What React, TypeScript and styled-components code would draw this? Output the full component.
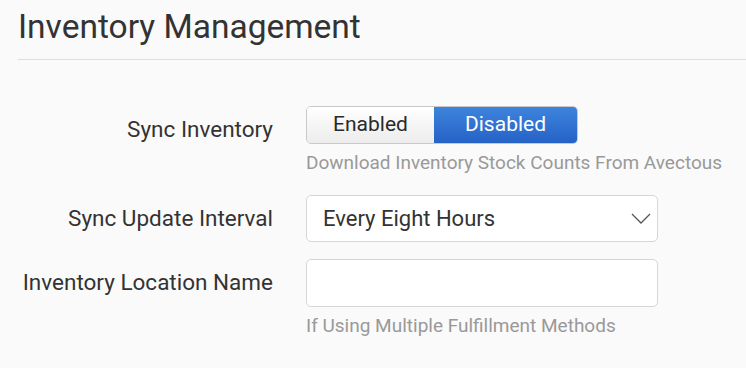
import React, { useState } from 'react';
import styled, { createGlobalStyle } from 'styled-components';

const GlobalStyle = createGlobalStyle`
  html, body {
    margin: 0;
    padding: 0;
    background: #fafafa;
  }
  body {
    font-family: Roboto, "Noto Sans", "Liberation Sans", sans-serif;
    color: #333;
  }
`;

type SegmentProps = { $active?: boolean; $first?: boolean };

const App = () => {
    const [sync, setSync] = useState<'enabled' | 'disabled'>('disabled');

    return (
        <>
            <GlobalStyle/>
            <Page>
                <Title>Inventory Management</Title>
                <Form>
                    <Label>Sync Inventory</Label>
                    <Field>
                        <Toggle>
                            <Segment $first $active={sync === 'enabled'} onClick={() => setSync('enabled')}>
                                Enabled
                            </Segment>
                            <Segment $active={sync === 'disabled'} onClick={() => setSync('disabled')}>
                                Disabled
                            </Segment>
                        </Toggle>
                        <Help>Download Inventory Stock Counts From Avectous</Help>
                    </Field>

                    <Label>Sync Update Interval</Label>
                    <Field>
                        <SelectBox>
                            <span>Every Eight Hours</span>
                            <svg width="20" height="11" viewBox="0 0 20 11" fill="none">
                                <path d="M1 1l9 9 9-9" stroke="#555" strokeWidth="1.3"/>
                            </svg>
                        </SelectBox>
                    </Field>

                    <Label>Inventory Location Name</Label>
                    <Field>
                        <TextInput type="text"/>
                        <Help>If Using Multiple Fulfillment Methods</Help>
                    </Field>
                </Form>
            </Page>
        </>
    );
};
export default App;

const Page = styled.div`
  padding-left: 18px;
  width: 728px;
`;

const Title = styled.h1`
  margin: 0;
  padding: 7px 0 12px;
  font-size: 33.5px;
  font-weight: 400;
  line-height: 40px;
  color: #333;
  border-bottom: 1px solid #dedede;
`;

const Form = styled.div`
  display: grid;
  grid-template-columns: 255px 352px;
  column-gap: 33px;
  row-gap: 17px;
  align-items: start;
  padding-top: 46px;
`;

const Label = styled.div`
  text-align: right;
  font-size: 22.5px;
  line-height: 47px;
  white-space: nowrap;
  color: #333;
`;

const Field = styled.div`
  display: flex;
  flex-direction: column;
  align-items: flex-start;
`;

const Toggle = styled.div`
  display: flex;
  height: 38px;
  border-radius: 5px;
  overflow: hidden;
  border: 1px solid #c9c9c9;
  box-sizing: border-box;
`;

const Segment = styled.button<SegmentProps>`
  border: none;
  margin: 0;
  padding: 0 0 2px;
  width: ${p => (p.$first ? '127px' : '143px')};
  font-family: inherit;
  font-size: 21px;
  cursor: pointer;
  color: ${p => (p.$active ? '#fff' : '#2a2a2a')};
  background: ${p => (p.$active
    ? 'linear-gradient(#3d84dc, #2562c6)'
    : 'linear-gradient(#ffffff, #ececec)')};
`;

const Help = styled.div`
  margin: 8px 0 4px;
  font-size: 19px;
  line-height: 22px;
  white-space: nowrap;
  color: #999;
`;

const SelectBox = styled.div`
  box-sizing: border-box;
  width: 352px;
  height: 47px;
  border: 1px solid #d6d6d6;
  border-radius: 5px;
  background: #fff;
  display: flex;
  align-items: center;
  justify-content: space-between;
  padding: 0 6px 0 16px;
  font-size: 22px;
  color: #333;
`;

const TextInput = styled.input`
  box-sizing: border-box;
  width: 352px;
  height: 48px;
  border: 1px solid #d6d6d6;
  border-radius: 5px;
  background: #fff;
  font-family: inherit;
  font-size: 22px;
  padding: 0 16px;
  outline: none;
`;
